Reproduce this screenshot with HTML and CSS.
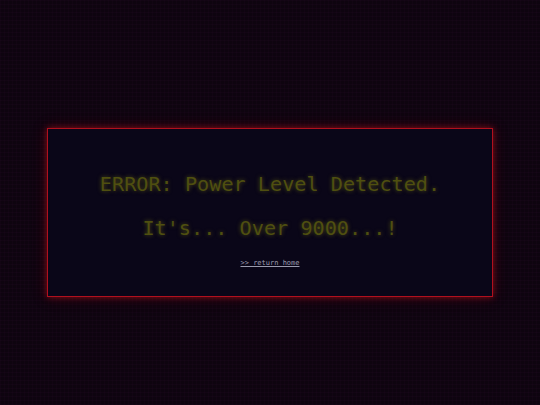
FILE: index.html
```html
<!DOCTYPE html>
<html lang="en">
<head>
<meta charset="UTF-8">
<meta name="viewport" content="width=device-width, initial-scale=1.0">
<title>Error</title>
<link rel="stylesheet" href="styles.css">
</head>
<body>
  <div class="screen">
    <div class="panel">
      <h1 class="line">ERROR: Power Level Detected.</h1>
      <p class="line">It's... Over 9000...!</p>
      <a class="home" href="#">&gt;&gt; return home</a>
    </div>
  </div>
</body>
</html>
```
FILE: styles.css
```css
html, body {
  margin: 0;
  height: 100%;
}

body {
  background-color: #0e040f;
  /* faint grid over the dark background */
  background-image:
    linear-gradient(rgba(90, 20, 90, 0.06) 1px, transparent 1px),
    linear-gradient(90deg, rgba(90, 20, 90, 0.06) 1px, transparent 1px);
  background-size: 4px 4px;
  font-family: "DejaVu Sans Mono", "Liberation Mono", monospace;
  overflow: hidden;
}

.screen {
  display: flex;
  justify-content: center;
  align-items: center;
  height: 100%;
}

.panel {
  width: 446px;
  height: 169px;
  margin-top: 20px;
  box-sizing: border-box;
  border: 1px solid #b0101e;
  background-color: #0a0618;
  box-shadow: 0 0 6px rgba(200, 20, 30, 0.55), 0 0 14px rgba(150, 10, 20, 0.3);
  display: flex;
  flex-direction: column;
  align-items: center;
  padding-top: 41px;
}

.line {
  margin: 0;
  font-size: 20.2px;
  font-weight: normal;
  line-height: 28px;
  color: #4f4f10;
  text-shadow: 0 0 4px rgba(120, 120, 20, 0.6);
}

p.line {
  margin-top: 16px;
}

.home {
  margin-top: 17px;
  font-size: 7px;
  color: #9a9aae;
  text-decoration: underline;
}
```
